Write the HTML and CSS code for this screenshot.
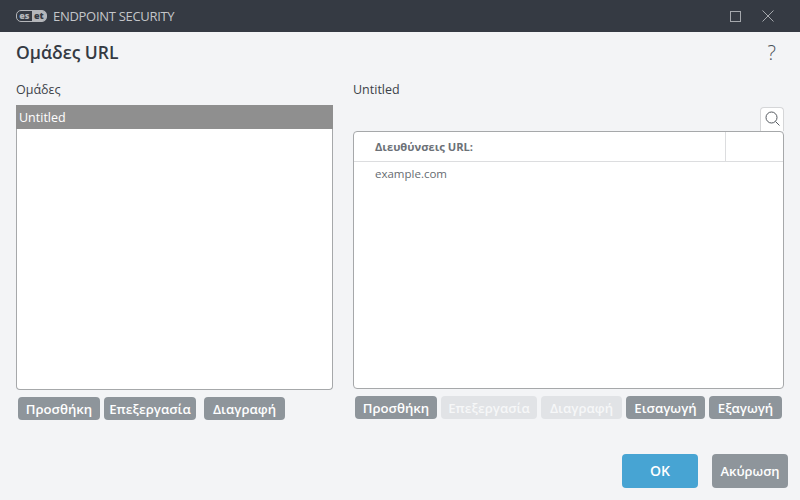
FILE: index.html
```html
<!DOCTYPE html>
<html lang="el">
<head>
    <meta charset="UTF-8">
    <title>Ομάδες URL</title>
    <link rel="stylesheet" href="styles.css">
</head>
<body>
    <div class="titlebar">
        <div class="logo"><span class="logo-es">es</span><span class="logo-et">et</span></div>
        <div class="product">ENDPOINT SECURITY</div>
        <div class="window-btns">
            <svg width="12" height="12" viewBox="0 0 12 12"><rect x="0.5" y="1.5" width="10" height="10" fill="none" stroke="#a5a8ad" stroke-width="1"/></svg>
            <svg width="12" height="12" viewBox="0 0 12 12"><path d="M0.5 0.5L11.5 11.5M11.5 0.5L0.5 11.5" fill="none" stroke="#a5a8ad" stroke-width="1"/></svg>
        </div>
    </div>

    <div class="header">
        <h1>Ομάδες URL</h1>
        <span class="help">?</span>
    </div>

    <div class="columns">
        <div class="col col-left">
            <div class="col-label">Ομάδες</div>
            <div class="listbox">
                <div class="list-row">Untitled</div>
            </div>
            <div class="btn-row">
                <button class="btn b-add">Προσθήκη</button>
                <button class="btn b-edit">Επεξεργασία</button>
                <button class="btn b-del">Διαγραφή</button>
            </div>
        </div>

        <div class="col col-right">
            <div class="col-label">Untitled</div>
            <div class="search-row">
                <div class="search-btn">
                    <svg width="16" height="16" viewBox="0 0 16 16"><circle cx="6.5" cy="6.5" r="5.5" fill="none" stroke="#555a60" stroke-width="1"/><path d="M10.5 10.5L14.5 14.5" fill="none" stroke="#555a60" stroke-width="1"/></svg>
                </div>
            </div>
            <div class="table">
                <div class="table-head">
                    <div class="th-main">Διευθύνσεις URL:</div>
                    <div class="th-extra"></div>
                </div>
                <div class="table-row">example.com</div>
            </div>
            <div class="btn-row">
                <button class="btn r-add">Προσθήκη</button>
                <button class="btn r-edit off">Επεξεργασία</button>
                <button class="btn r-del off">Διαγραφή</button>
                <button class="btn r-imp">Εισαγωγή</button>
                <button class="btn r-exp">Εξαγωγή</button>
            </div>
        </div>
    </div>

    <div class="footer">
        <button class="btn big ok">OK</button>
        <button class="btn big">Ακύρωση</button>
    </div>
</body>
</html>
```

FILE: styles.css
```css
* {
    box-sizing: border-box;
}

html, body {
    margin: 0;
    height: 100%;
}

body {
    width: 800px;
    height: 500px;
    overflow: hidden;
    background-color: #f3f4f6;
    color: #3c4249;
    font-family: "Open Sans", "Noto Sans", sans-serif;
    font-size: 13px;
    display: flex;
    flex-direction: column;
}

.titlebar {
    height: 32px;
    background-color: #353a43;
    display: flex;
    align-items: center;
    padding-left: 16px;
    flex-shrink: 0;
}

.logo {
    display: flex;
    width: 31px;
    height: 12px;
    border: 1px solid #b4b6ba;
    border-radius: 5px;
    font-size: 9px;
    line-height: 10px;
    font-weight: 800;
    margin-right: 6px;
}

.logo-es {
    flex: 1;
    text-align: center;
    color: #b4b6ba;
}

.logo-et {
    flex: 1;
    text-align: center;
    background-color: #b4b6ba;
    color: #353a43;
    border-radius: 0 3px 3px 0;
}

.product {
    color: #c4c6c9;
    font-size: 13px;
    letter-spacing: -0.3px;
}

.window-btns {
    margin-left: auto;
    display: flex;
    gap: 20px;
    padding-right: 26px;
}

.window-btns svg {
    display: block;
}

.header {
    height: 44px;
    display: flex;
    justify-content: space-between;
    align-items: center;
    padding: 0 24px 4px 16px;
    flex-shrink: 0;
}

h1 {
    margin: 0;
    font-size: 17.5px;
    font-weight: 600;
    color: #353a43;
}

.help {
    font-size: 20px;
    font-weight: 300;
    color: #4a5058;
}

.columns {
    display: flex;
    padding: 0 16px;
    gap: 20px;
    height: 344px;
    flex-shrink: 0;
}

.col {
    display: flex;
    flex-direction: column;
    padding-top: 5px;
}

.col-left {
    width: 317px;
}

.col-right {
    width: 431px;
}

.col-label {
    height: 24px;
    line-height: 18px;
    font-size: 12.5px;
    flex-shrink: 0;
}

.listbox {
    height: 285px;
    background-color: #fff;
    border: 1px solid #a6a8aa;
    border-top: none;
    border-radius: 0 0 4px 4px;
}

.list-row {
    height: 24px;
    margin: 0 -1px;
    padding: 1px 0 0 3px;
    line-height: 24px;
    background-color: #8f8f8f;
    color: #fff;
    font-size: 12.5px;
}

.search-row {
    height: 26px;
    display: flex;
    justify-content: flex-end;
    align-items: flex-end;
}

.search-btn {
    width: 24px;
    height: 24px;
    padding: 3px 0 0 4px;
    background-color: #fff;
    border: 1px solid #d5d6d8;
    border-bottom: none;
    border-radius: 4px 4px 0 0;
}

.search-btn svg {
    display: block;
}

.table {
    height: 258px;
    background-color: #fff;
    border: 1px solid #a6a8aa;
    border-radius: 4px;
}

.table-head {
    height: 30px;
    display: flex;
    border-bottom: 1px solid #dcdddf;
}

.th-main {
    flex: 1;
    padding-left: 21px;
    line-height: 29px;
    font-size: 11.2px;
    font-weight: 700;
    color: #6c7177;
}

.th-extra {
    width: 58px;
    border-left: 1px solid #dcdddf;
}

.table-row {
    padding-left: 21px;
    line-height: 24px;
    font-size: 11.5px;
    color: #666b71;
}

.btn-row {
    display: flex;
    gap: 4px;
    padding: 7px 2px 0;
}

.btn {
    height: 23px;
    padding: 0;
    border: none;
    border-radius: 4px;
    background-color: #8e959b;
    color: #fff;
    font-family: inherit;
    font-size: 13.2px;
    font-weight: 600;
    line-height: 22px;
    text-align: center;
}

.b-add { width: 82px; }
.b-edit { width: 92px; }
.b-del { width: 81px; margin-left: 4px; }

.r-add { width: 82px; }
.r-edit { width: 96px; }
.r-del { width: 81px; }
.r-imp { width: 79px; }
.r-exp { width: 73px; }

.btn.off {
    background-color: #e1e3e6;
    color: #f6f7f8;
}

.footer {
    display: flex;
    justify-content: flex-end;
    gap: 14px;
    padding: 34px 12px 0 0;
}

.btn.big {
    width: 76px;
    height: 34px;
    font-size: 13px;
}

.btn.ok {
    background-color: #47a4d3;
    font-size: 14px;
}
```
